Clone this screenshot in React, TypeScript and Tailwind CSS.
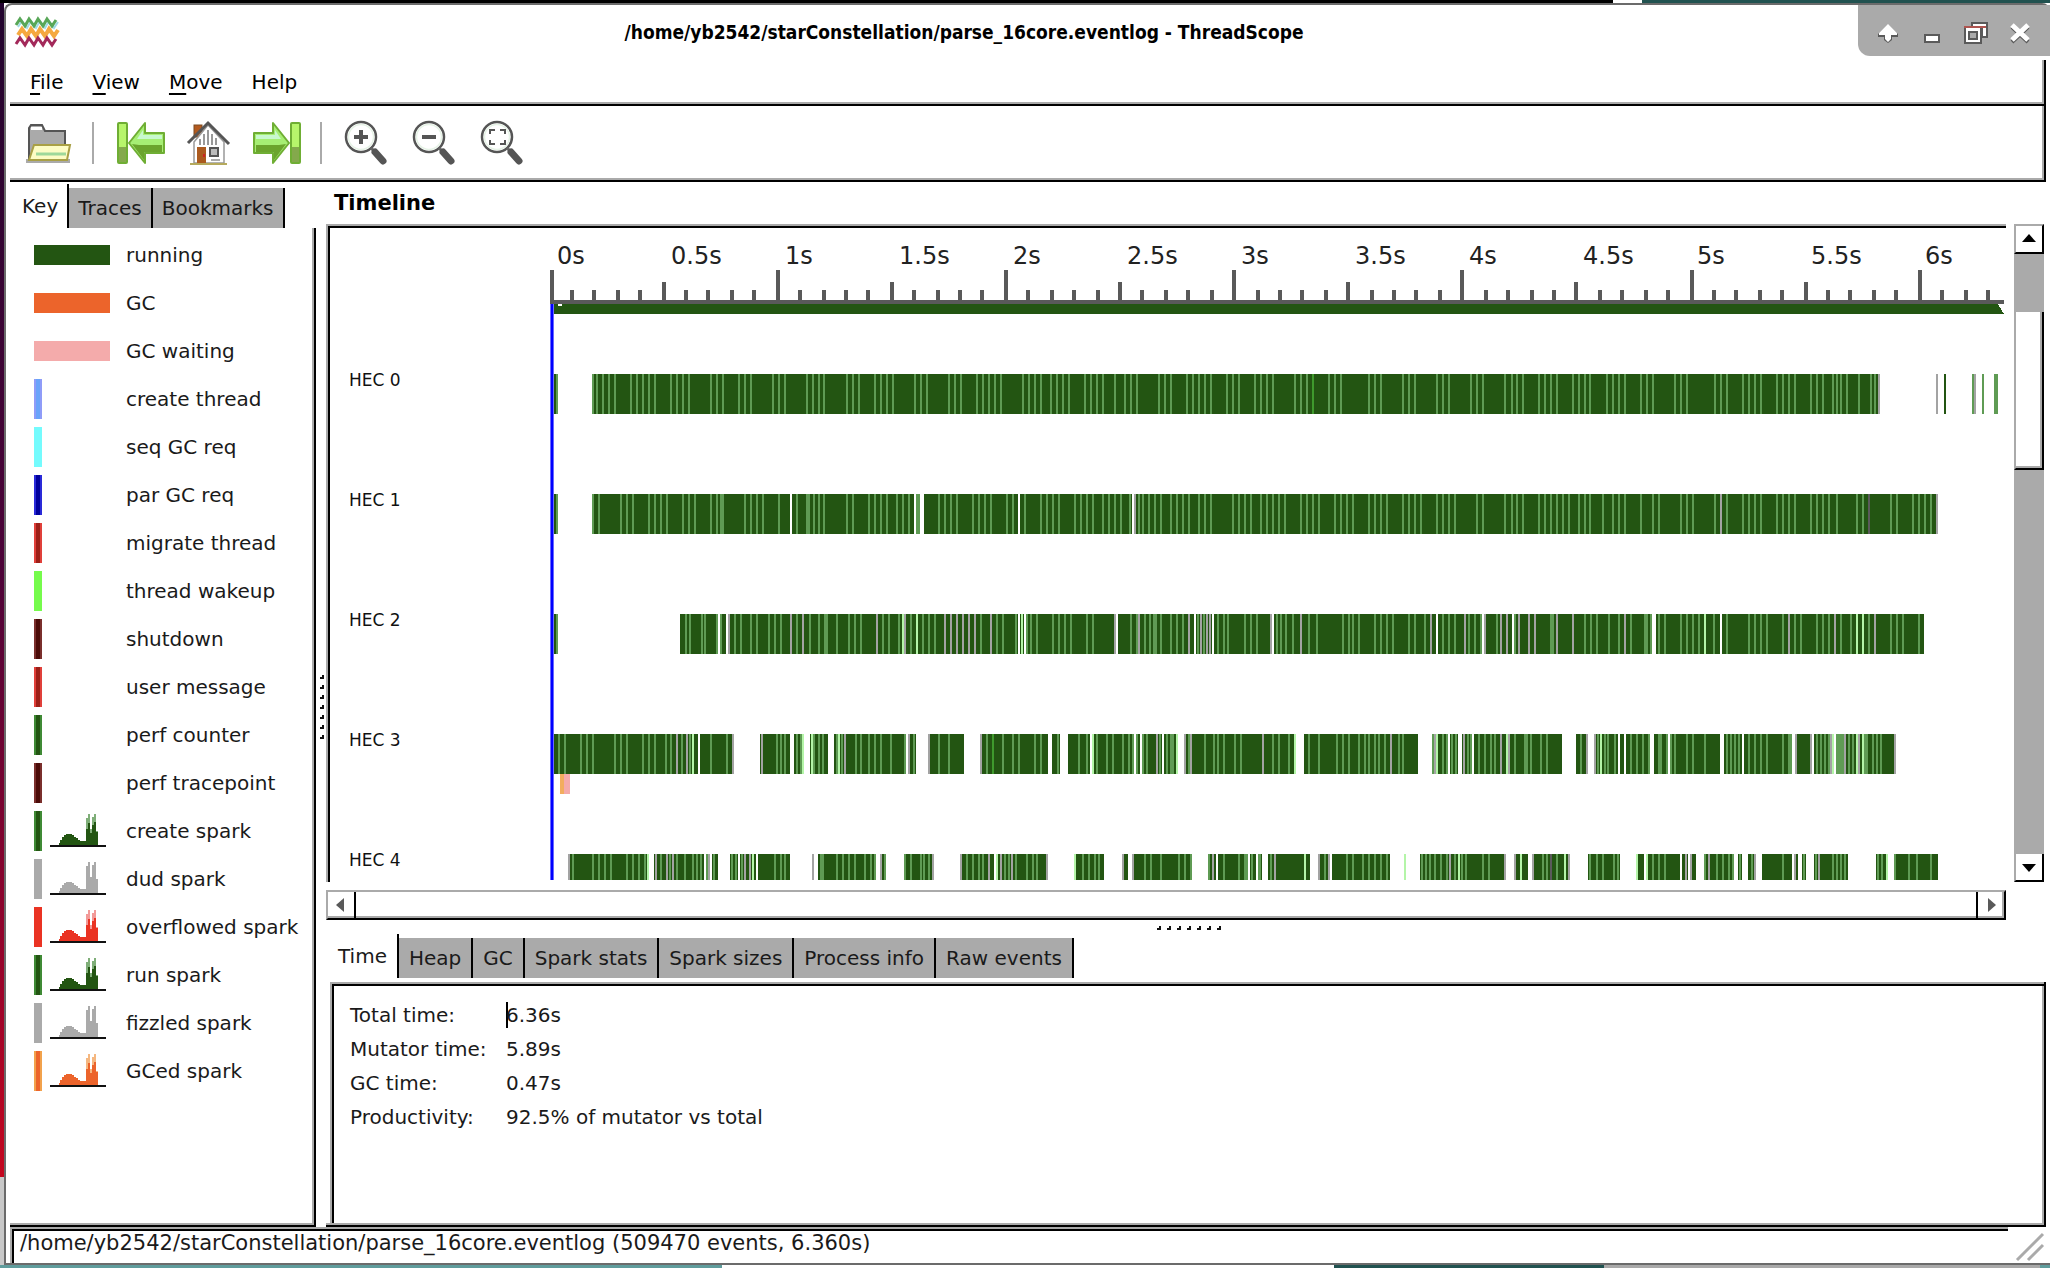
import React from "react";

type Kind = "light" | "gray" | "pale" | "white" | "dark" | "bright";

type Tile = {
  origin: number;
  runs: [number, number][];
  marks: Partial<Record<Kind, number[]>>;
};

const COLORS: Record<Kind, string> = {
  light: "#5f9b54",
  gray: "#a3a3a3",
  pale: "#b4f5a8",
  white: "#ffffff",
  dark: "#5a5a5a",
  bright: "#3f9a2d",
};

const GREEN = "#235512";
const SAMPLES_PER_PIXEL = 1568 / 600;

const snap = (origin: number, v: number) => 2 * Math.round((origin + v / SAMPLES_PER_PIXEL) / 2);

const TRACKS: { name: string; y: number; h: number; tiles: Tile[] }[] = [
  {
    name: "HEC 0",
    y: 374,
    h: 40,
    tiles: [
      {
        origin: 320,
        runs: [[607, 622], [712, 1568]],
        marks: {
          light: [619, 713, 724, 739, 755, 771, 813, 828, 843, 859, 875, 917, 933, 949, 964, 1022, 1037, 1053, 1095, 1110, 1126, 1183, 1199, 1215, 1272, 1288, 1303, 1318, 1377, 1393, 1408, 1450, 1466, 1481, 1497],
        },
      },
      {
        origin: 900,
        runs: [[0, 1568]],
        marks: {
          light: [39, 55, 70, 127, 143, 159, 201, 216, 232, 248, 264, 321, 337, 352, 368, 394, 409, 425, 441, 483, 499, 514, 530, 561, 587, 603, 619, 676, 692, 708, 749, 765, 781, 796, 812, 854, 870, 886, 928, 943, 959, 974, 1032, 1048, 1063, 1121, 1137, 1152, 1225, 1241, 1257, 1315, 1330, 1345, 1403, 1419, 1434, 1493, 1509, 1524],
          bright: [1079],
        },
      },
      {
        origin: 1450,
        runs: [[131, 1122], [1291, 1296]],
        marks: {
          light: [145, 161, 176, 190, 232, 248, 264, 280, 321, 337, 352, 367, 410, 427, 442, 458, 499, 515, 530, 587, 603, 619, 692, 708, 724, 765, 781, 796, 812, 854, 870, 886, 902, 944, 960, 975, 1001, 1012, 1022, 1038, 1069, 1101, 1111, 1367, 1393, 1424, 1429],
          gray: [1121, 1272, 1373],
        },
      },
    ],
  },
  {
    name: "HEC 1",
    y: 494,
    h: 40,
    tiles: [
      {
        origin: 320,
        runs: [[607, 622], [712, 1568]],
        marks: {
          light: [619, 713, 729, 787, 802, 818, 860, 875, 891, 906, 949, 964, 980, 1022, 1037, 1048, 1053, 1110, 1126, 1142, 1157, 1199, 1246, 1272, 1277, 1290, 1303, 1318, 1377, 1393, 1434, 1450, 1466, 1481, 1508, 1523, 1539],
          white: [1230],
        },
      },
      {
        origin: 900,
        runs: [[50, 1568]],
        marks: {
          light: [44, 49, 102, 117, 133, 149, 191, 206, 222, 238, 280, 296, 326, 368, 384, 399, 415, 457, 473, 488, 504, 530, 546, 561, 577, 600, 625, 635, 650, 666, 682, 708, 724, 739, 755, 781, 796, 812, 870, 886, 901, 917, 943, 959, 975, 990, 1006, 1048, 1063, 1079, 1095, 1137, 1152, 1168, 1184, 1225, 1241, 1257, 1272, 1315, 1330, 1345, 1361, 1403, 1419, 1434, 1450, 1508, 1524],
          white: [39, 55, 60, 311, 609],
          gray: [615],
        },
      },
      {
        origin: 1450,
        runs: [[131, 1273]],
        marks: {
          light: [145, 161, 176, 190, 232, 248, 264, 280, 295, 310, 337, 352, 367, 399, 425, 442, 458, 499, 530, 546, 603, 619, 635, 692, 724, 765, 781, 796, 812, 854, 870, 886, 902, 944, 960, 975, 990, 1012, 1064, 1079, 1152, 1168, 1210, 1226, 1241, 1257],
          gray: [708, 1272],
          dark: [1095],
        },
      },
    ],
  },
  {
    name: "HEC 2",
    y: 614,
    h: 40,
    tiles: [
      {
        origin: 320,
        runs: [[607, 622], [941, 1568]],
        marks: {
          light: [619, 957, 967, 997, 1006, 1037, 1048, 1085, 1100, 1126, 1142, 1173, 1189, 1204, 1246, 1280, 1303, 1320, 1326, 1350, 1383, 1398, 1414, 1471, 1487, 1513],
          gray: [1069, 1230, 1262, 1455],
          white: [1042, 1064],
        },
      },
      {
        origin: 900,
        runs: [[0, 1568]],
        marks: {
          light: [28, 60, 75, 91, 212, 254, 270, 303, 332, 342, 358, 399, 415, 430, 446, 488, 504, 603, 619, 640, 653, 663, 668, 682, 708, 724, 739, 780, 795, 830, 846, 857, 901, 917, 932, 985, 995, 1010, 1027, 1069, 1090, 1157, 1173, 1184, 1200, 1241, 1257, 1272, 1288, 1330, 1345, 1371, 1419, 1434, 1450, 1487, 1503, 1518, 1560],
          gray: [12, 117, 133, 149, 165, 180, 196, 238, 563, 625, 755, 786, 801, 811, 970, 1048, 1387, 1476, 1529],
          pale: [7, 44, 318],
          white: [311, 326, 568, 770, 817, 975, 1403, 1524],
        },
      },
      {
        origin: 1450,
        runs: [[131, 528], [537, 1239]],
        marks: {
          light: [170, 264, 269, 352, 368, 383, 415, 442, 473, 510, 516, 525, 546, 562, 603, 619, 635, 650, 690, 724, 781, 796, 812, 828, 870, 902, 917, 959, 975, 991, 1022, 1048, 1095, 1152, 1168, 1184, 1226],
          gray: [134, 149, 180, 206, 222, 279, 321, 458, 885, 1006, 1110],
          pale: [666, 1063, 1079],
          white: [164, 708],
        },
      },
    ],
  },
  {
    name: "HEC 3",
    y: 734,
    h: 40,
    tiles: [
      {
        origin: 320,
        runs: [[607, 1080], [1152, 1228], [1240, 1264], [1282, 1328], [1344, 1531], [1537, 1558]],
        marks: {
          light: [625, 640, 682, 697, 713, 771, 787, 802, 843, 859, 875, 904, 917, 945, 967, 1022, 1063, 1194, 1204, 1215, 1246, 1257, 1290, 1303, 1315, 1350, 1365, 1400, 1414, 1434, 1450, 1466, 1492, 1528, 1552],
          gray: [933, 959, 1079, 1154, 1372, 1540],
          pale: [975, 1262, 1285, 1357],
          white: [990],
        },
      },
      {
        origin: 900,
        runs: [[74, 168], [210, 387], [397, 418], [440, 497], [502, 612], [617, 627], [632, 686], [691, 727], [742, 757], [758, 1035], [1056, 1354], [1390, 1431], [1437, 1458], [1469, 1495], [1500, 1568]],
        marks: {
          light: [102, 128, 227, 270, 295, 311, 353, 368, 413, 467, 488, 514, 540, 556, 582, 598, 608, 620, 635, 645, 680, 697, 708, 713, 755, 797, 821, 832, 848, 875, 891, 975, 990, 1016, 1069, 1095, 1142, 1157, 1173, 1199, 1215, 1226, 1241, 1252, 1267, 1303, 1315, 1392, 1419, 1429, 1442, 1452, 1485, 1493, 1513, 1529, 1545, 1555],
          gray: [76, 212, 671, 745, 760, 948, 1283, 1398, 1474],
          pale: [504, 723, 1033, 1404],
          bright: [243],
        },
      },
      {
        origin: 1450,
        runs: [[131, 293], [329, 360], [376, 439], [445, 455], [460, 523], [533, 570], [575, 706], [716, 763], [768, 894], [902, 945], [951, 1166]],
        marks: {
          light: [170, 195, 200, 211, 238, 253, 342, 387, 405, 412, 432, 473, 488, 504, 520, 546, 551, 566, 578, 588, 619, 635, 666, 724, 734, 745, 755, 781, 796, 812, 828, 870, 886, 891, 960, 970, 980, 990, 1012, 1017, 1022, 1027, 1043, 1053, 1084, 1089, 1105, 1116, 1126],
          gray: [134, 154, 357, 378, 903, 943, 996, 1033, 1068, 1163],
          pale: [150, 395, 1001, 1063, 1079],
          white: [1006],
        },
      },
    ],
  },
  {
    name: "HEC 4",
    y: 854,
    h: 26,
    tiles: [
      {
        origin: 320,
        runs: [[650, 859], [875, 1003], [1009, 1018], [1024, 1040], [1072, 1092], [1098, 1139], [1146, 1228], [1301, 1452], [1463, 1479], [1526, 1568]],
        marks: {
          light: [661, 713, 729, 744, 760, 802, 818, 833, 849, 891, 915, 933, 954, 975, 985, 995, 1012, 1030, 1077, 1088, 1103, 1189, 1204, 1215, 1308, 1315, 1350, 1366, 1383, 1398, 1424, 1440, 1450, 1476, 1530],
          gray: [652, 877, 907, 923, 1017, 1111, 1124, 1288, 1467],
          pale: [857, 1132],
        },
      },
      {
        origin: 900,
        runs: [[10, 89], [158, 246], [251, 387], [456, 533], [581, 596], [606, 763], [805, 826], [831, 909], [917, 930], [935, 946], [962, 1071], [1092, 1124], [1129, 1281], [1358, 1568]],
        marks: {
          light: [28, 54, 64, 75, 175, 191, 207, 217, 275, 285, 303, 332, 347, 358, 478, 493, 509, 520, 640, 655, 682, 729, 744, 760, 808, 846, 886, 902, 906, 919, 938, 942, 970, 1110, 1168, 1184, 1210, 1225, 1241, 1257, 1272, 1364, 1374, 1384, 1399, 1415, 1429, 1450, 1468, 1480, 1523, 1539],
          gray: [86, 160, 233, 264, 293, 384, 583, 609, 818, 980, 1095, 1121, 1437],
          pale: [254, 458, 1058, 1319, 1461],
        },
      },
      {
        origin: 1450,
        runs: [[131, 146], [168, 204], [215, 313], [361, 444], [487, 507], [513, 601], [606, 621], [628, 643], [664, 742], [753, 763], [779, 799], [815, 894], [900, 909], [920, 930], [951, 1040], [1113, 1145], [1160, 1275]],
        marks: {
          light: [243, 253, 279, 367, 383, 399, 428, 440, 530, 546, 562, 667, 698, 714, 729, 740, 757, 788, 870, 925, 957, 1001, 1012, 1022, 1033, 1118, 1129, 1163, 1199, 1220, 1257],
          gray: [143, 170, 217, 310, 618, 630, 676, 797, 902, 965],
          pale: [186, 300, 489, 515, 1142],
          dark: [264],
        },
      },
    ],
  },
];

const KINDS: Kind[] = ["light", "gray", "pale", "white", "dark", "bright"];

function Track({ track }: { track: (typeof TRACKS)[number] }) {
  const { y, h, tiles } = track;
  const runs = tiles
    .flatMap((t) => t.runs.map(([a, b]) => [snap(t.origin, a), snap(t.origin, b)]))
    .map(([a, b]) => `M${a} ${y}H${b}V${y + h}H${a}Z`)
    .join("");
  return (
    <g>
      <text x="349" y={y + 12} fontSize="17" fill="#111">
        {track.name}
      </text>
      <path d={runs} fill={GREEN} />
      {KINDS.map((k) => {
        const d = tiles
          .flatMap((t) => (t.marks[k] ?? []).map((v) => Math.round(t.origin + v / SAMPLES_PER_PIXEL) - 1))
          .map((x) => `M${x} ${y}h2v${h}h-2Z`)
          .join("");
        return d ? <path key={k} d={d} fill={COLORS[k]} /> : null;
      })}
    </g>
  );
}

function TimelineChart() {
  const ticks = Array.from({ length: 64 }, (_, k) => {
    const x = k === 0 ? 552 : 552 + 2 * Math.floor(11.42 * k - 1);
    const top = k % 10 === 0 ? 270 : k % 5 === 0 ? 282 : 290;
    return `M${x - 2} ${top}h4V300h-4Z`;
  }).join("");
  const labels = Array.from({ length: 13 }, (_, i) => i / 2);
  return (
    <svg id="timeline" width="1674" height="654" viewBox="330 228 1674 654" shapeRendering="crispEdges" fontFamily="'DejaVu Sans', sans-serif" role="img" aria-label="Timeline of HEC activity" className="block max-w-none shrink-0">
      {labels.map((t) => (
        <text key={t} x={557 + 228 * t} y="264" fontSize="24" fill="#222">
          {t}s
        </text>
      ))}
      <path d="M552 304H1998L2004 314H552Z" fill={GREEN} />
      <path d={ticks} fill="#595959" />
      <rect x="550" y="300" width="1454" height="4" fill="#595959" />
      <rect x="558" y="304" width="4" height="2" fill="#fff" />
      {TRACKS.map((t) => (
        <Track key={t.name} track={t} />
      ))}
      <rect x="560" y="774" width="4" height="20" fill="#f2ad5e" />
      <rect x="564" y="774" width="6" height="20" fill="#f4abab" />
      <rect x="550" y="304" width="4" height="576" fill="#6a6aff" />
      <rect x="551" y="304" width="2" height="576" fill="#0000ff" />
    </svg>
  );
}

type KeyItem = { label: string; edge: string; fill: string; wide?: boolean; tip?: string; spark?: boolean };

const KEY_ITEMS: KeyItem[] = [
  { label: "running", edge: "#235512", fill: "#235512", wide: true },
  { label: "GC", edge: "#ec642b", fill: "#ec642b", wide: true },
  { label: "GC waiting", edge: "#f4abab", fill: "#f4abab", wide: true },
  { label: "create thread", edge: "#8f9cf8", fill: "#69a3fa" },
  { label: "seq GC req", edge: "#74fbfd", fill: "#74fbfd" },
  { label: "par GC req", edge: "#2a2ad8", fill: "#00009c" },
  { label: "migrate thread", edge: "#e0403a", fill: "#9c1f17" },
  { label: "thread wakeup", edge: "#75fb4c", fill: "#75fb4c" },
  { label: "shutdown", edge: "#7a2f2c", fill: "#4b0b08" },
  { label: "user message", edge: "#e0403a", fill: "#9c1f17" },
  { label: "perf counter", edge: "#3f8a35", fill: "#235512" },
  { label: "perf tracepoint", edge: "#7a2f2c", fill: "#4b0b08" },
  { label: "create spark", edge: "#3f8a35", fill: "#235512", tip: "#7fae78", spark: true },
  { label: "dud spark", edge: "#aaaaaa", fill: "#aaaaaa", tip: "#aaaaaa", spark: true },
  { label: "overflowed spark", edge: "#ea3323", fill: "#ea3323", tip: "#f29a98", spark: true },
  { label: "run spark", edge: "#3f8a35", fill: "#235512", tip: "#7fae78", spark: true },
  { label: "fizzled spark", edge: "#aaaaaa", fill: "#aaaaaa", tip: "#aaaaaa", spark: true },
  { label: "GCed spark", edge: "#f2a24c", fill: "#ec642b", tip: "#f5b780", spark: true },
];

function KeySwatch({ item }: { item: KeyItem }) {
  return (
    <svg width="76" height="40" viewBox="0 0 76 40" shapeRendering="crispEdges" aria-hidden="true">
      {item.wide ? (
        <rect y="10" width="76" height="20" fill={item.fill} />
      ) : (
        <>
          <rect width="8" height="40" fill={item.edge} />
          <rect x="2" width="4" height="40" fill={item.fill} />
        </>
      )}
      {item.spark && (
        <>
          <path d="M52 34V7h2V3h2v15h2V34ZM58 34V6h2V3h2v17h2V34Z" fill={item.tip} />
          <path d="M25 34v-2h1v-3h2v-3h2v-2h2v-1h6v1h2v2h2v1h2v2h2v1h6V18h2v-6h2v10h2v-8h2v-3h2v10h2v13Z" fill={item.fill} />
          <rect x="16" y="34" width="56" height="2" fill="#111" />
        </>
      )}
    </svg>
  );
}

function Logo() {
  const wave = "l4 -6 5 7 4 -7 5 7 4 -7 5 7 4 -7 5 7 4 -6";
  return (
    <svg width="46" height="34" viewBox="0 0 46 34" fill="none" strokeWidth="3" aria-hidden="true">
      <path d={`M4 12${wave}`} stroke="#9fdbe6" strokeWidth="2" />
      <path d={`M2 10${wave}`} stroke="#58a757" />
      <path d={`M4 20${wave}`} stroke="#f5a93f" strokeWidth="4" />
      <path d={`M2 29${wave}`} stroke="#a3295a" />
    </svg>
  );
}

function FolderIcon() {
  return (
    <svg width="48" height="44" viewBox="0 0 48 44" aria-hidden="true">
      <rect x="1" y="38" width="44" height="4" fill="#aaa" />
      <path d="M4 39V7l2-3h11l3 6h20v14H10L6 39Z" fill="#aaa" stroke="#555" strokeWidth="2" />
      <path d="M6 6h11v3H6Z" fill="#fff" />
      <path d="M9 24h36l-3 15H4Z" fill="#fdfcc4" stroke="#a9a045" strokeWidth="2" />
      <path d="M11 33h30" stroke="#9fd89a" strokeWidth="3" />
    </svg>
  );
}

function ArrowIcon({ flip }: { flip?: boolean }) {
  return (
    <svg width="48" height="44" viewBox="0 0 48 44" className={flip ? "-scale-x-100" : ""} aria-hidden="true">
      <g stroke="#6fae34" strokeWidth="2" strokeLinejoin="round">
        <rect x="1" y="2" width="9" height="40" rx="1" fill="#b7f56b" />
        <path d="M12 22 28 2v10h19v20H28v10Z" fill="#a6ee74" />
      </g>
      <path d="M2 26h7v15H2Z" fill="#84a94c" />
      <path d="M26 9v5h19v4H20Z" fill="#c8f8ce" />
      <path d="M15 23l7 1h23v7H27v8Z" fill="#6ba42d" />
    </svg>
  );
}

function HomeIcon() {
  return (
    <svg width="46" height="46" viewBox="0 0 46 46" aria-hidden="true">
      <rect x="8" y="5" width="8" height="12" fill="#b45a1e" stroke="#7a4a20" />
      <path d="M8 22 22 5l16 17v21H8Z" fill="#fff" stroke="#999" strokeWidth="1.5" />
      <path d="M14 19v6M18 14v11M22 10v15M26 14v11M30 18v7" stroke="#999" strokeWidth="2" />
      <path d="M2 23 22 3l21 21" fill="none" stroke="#555" strokeWidth="3" />
      <rect x="11" y="27" width="9" height="16" fill="#ab5a1e" />
      <rect x="17" y="34" width="2" height="3" fill="#c22" />
      <rect x="24" y="28" width="8" height="8" fill="#bbb" stroke="#555" strokeWidth="2" />
      <path d="M25 40h9" stroke="#aaa" strokeWidth="2" />
      <path d="M4 44h37" stroke="#b5a95c" strokeWidth="2" />
    </svg>
  );
}

function ZoomIcon({ kind }: { kind: "in" | "out" | "fit" }) {
  return (
    <svg width="46" height="46" viewBox="0 0 46 46" fill="none" aria-hidden="true">
      <circle cx="18" cy="17" r="15" stroke="#555" strokeWidth="2.5" />
      <circle cx="18" cy="17" r="12.5" stroke="#e6f3e6" strokeWidth="1.5" />
      <path d="M28 28l3 3" stroke="#666" strokeWidth="3" />
      <path d="M32 32l8 9" stroke="#555" strokeWidth="7" strokeLinecap="round" />
      {kind === "in" && <path d="M11 17h14M18 10v14" stroke="#555" strokeWidth="4" />}
      {kind === "out" && <path d="M11 17h14" stroke="#555" strokeWidth="4" />}
      {kind === "fit" && <path d="M11 14v-4h5M21 10h5v4M26 20v4h-5M16 24h-5v-4" stroke="#555" strokeWidth="2" />}
    </svg>
  );
}

function ToolButton({ label, children }: { label: string; children: React.ReactNode }) {
  return (
    <button type="button" aria-label={label} className="flex h-12 w-12 shrink-0 items-center justify-center">
      {children}
    </button>
  );
}

function WindowButton({ label, children }: { label: string; children: React.ReactNode }) {
  return (
    <button type="button" aria-label={label} className="flex h-9 w-11 items-center justify-center">
      <svg width="28" height="28" viewBox="0 0 28 28" aria-hidden="true">
        {children}
      </svg>
    </button>
  );
}

function Tabs({ label, names, compact }: { label: string; names: string[]; compact?: boolean }) {
  return (
    <div role="tablist" aria-label={label} className="flex h-11 shrink-0 items-end whitespace-nowrap">
      {names.map((n, i) =>
        i === 0 ? (
          <button key={n} role="tab" aria-selected="true" type="button" className={`h-11 border-r-2 border-black pl-3 ${compact ? "pr-[9px]" : "pr-2.5"}`}>
            {n}
          </button>
        ) : (
          <button key={n} role="tab" aria-selected="false" type="button" className={`h-10 border-r-2 border-black bg-[#aaaaaa] ${compact ? "px-[9px]" : "px-2.5"}`}>
            {n}
          </button>
        ),
      )}
    </div>
  );
}

function Arrow({ d, fill = "#000" }: { d: string; fill?: string }) {
  return (
    <svg width="16" height="16" viewBox="0 0 16 16" aria-hidden="true">
      <path d={d} fill={fill} />
    </svg>
  );
}

function Grip({ vertical }: { vertical?: boolean }) {
  return (
    <svg width={vertical ? 6 : 66} height={vertical ? 66 : 6} className="shrink-0" aria-hidden="true">
      {Array.from({ length: 7 }, (_, i) => (
        <path key={i} transform={vertical ? `translate(0 ${i * 10})` : `translate(${i * 10} 0)`} d="M0 5h4V1h-2v2h-2Z" fill="#111" />
      ))}
    </svg>
  );
}

const STATS = [
  ["Total time:", "6.36s"],
  ["Mutator time:", "5.89s"],
  ["GC time:", "0.47s"],
  ["Productivity:", "92.5% of mutator vs total"],
];

export default function App() {
  return (
    <div className="flex min-h-screen flex-col bg-white font-['DejaVu_Sans',sans-serif] text-[20px] leading-6 text-[#1a1a1a]">
      <div className="flex h-[3px] shrink-0">
        <div className="w-[1613px] bg-black" />
        <div className="w-[29px] bg-white" />
        <div className="flex-1 bg-[#215250]" />
      </div>

      <div className="flex flex-1">
        <div className="w-1 shrink-0 bg-[linear-gradient(#22042e_0%,#4d0338_45%,#a00328_80%,#c4061e_93%,#c8c8c8_93%)]" />
        <div className="flex min-w-0 flex-1 flex-col rounded-t-lg border-2 border-r-0 border-[#6b6b6b] bg-white">
          <header className="flex h-[55px] shrink-0 items-start">
            <div className="flex w-16 shrink-0 pt-2.5 pl-2">
              <Logo />
            </div>
            <h1 className="flex-1 pt-[15px] text-center font-['DejaVu_Sans_Condensed','DejaVu_Sans',sans-serif] text-[19px] font-bold text-black">
              /home/yb2542/starConstellation/parse_16core.eventlog - ThreadScope
            </h1>
            <div className="flex h-[51px] w-48 shrink-0 items-center rounded-bl-xl bg-[#aaaaaa] pt-1 pl-2">
              <WindowButton label="Keep above">
                <path d="M14 6 24 15v3h-6v3l-4 3-4-3v-3H4v-3Z" fill="#5a5a5a" />
                <path d="M14 5 23 14v2h-6v4l-3 3-3-3v-4H5v-2Z" fill="#fff" />
              </WindowButton>
              <WindowButton label="Minimize">
                <rect x="7" y="16" width="14" height="7" fill="#fff" stroke="#5a5a5a" strokeWidth="2" />
              </WindowButton>
              <WindowButton label="Restore">
                <path d="M10 4h15v14h-5V8H10Z" fill="#fff" stroke="#5a5a5a" strokeWidth="2" />
                <rect x="3" y="8" width="16" height="16" fill="#fff" stroke="#5a5a5a" strokeWidth="2" />
                <path d="M2 8h22" stroke="#b05550" strokeWidth="2" />
                <rect x="7" y="13" width="8" height="7" fill="#aaa" stroke="#5a5a5a" strokeWidth="2" />
              </WindowButton>
              <WindowButton label="Close">
                <path d="M6 8l16 15M22 8L6 23" stroke="#5a5a5a" strokeWidth="4" />
                <path d="M6 6l16 15M22 6L6 21" stroke="#fff" strokeWidth="5" />
              </WindowButton>
            </div>
          </header>

          <nav aria-label="Menu bar" className="mr-1 ml-1 flex h-[46px] shrink-0 items-center gap-[29px] border-r-2 border-b-2 border-black pl-5 text-black shadow-[inset_-2px_-2px_0_#aaaaaa]">
            <button type="button"><span className="underline decoration-2 underline-offset-4">F</span>ile</button>
            <button type="button"><span className="underline decoration-2 underline-offset-4">V</span>iew</button>
            <button type="button"><span className="underline decoration-2 underline-offset-4">M</span>ove</button>
            <button type="button">Help</button>
          </nav>

          <div role="toolbar" aria-label="Toolbar" className="mr-1 ml-1 flex h-[76px] shrink-0 items-center border-r-2 border-b-2 border-black pl-[15px] shadow-[inset_-2px_-2px_0_#aaaaaa]">
            <ToolButton label="Open"><FolderIcon /></ToolButton>
            <div className="mr-[23px] ml-[19px] h-[42px] w-0.5 bg-[#aaaaaa]" />
            <div className="flex gap-5">
              <ToolButton label="Jump to start"><ArrowIcon /></ToolButton>
              <ToolButton label="Centre on cursor"><HomeIcon /></ToolButton>
              <ToolButton label="Jump to end"><ArrowIcon flip /></ToolButton>
            </div>
            <div className="mr-[20px] ml-[19px] h-[42px] w-0.5 bg-[#aaaaaa]" />
            <div className="flex gap-5">
              <ToolButton label="Zoom in"><ZoomIcon kind="in" /></ToolButton>
              <ToolButton label="Zoom out"><ZoomIcon kind="out" /></ToolButton>
              <ToolButton label="Fit to window"><ZoomIcon kind="fit" /></ToolButton>
            </div>
          </div>

          <main className="flex flex-1 pl-1">
            <aside className="flex w-[306px] shrink-0 flex-col pt-0.5">
              <Tabs label="Side panel" names={["Key", "Traces", "Bookmarks"]} compact />
              <ul className="flex-1 border-r-2 border-b-2 border-black pt-[3px] pl-6 shadow-[inset_-2px_-2px_0_#aaaaaa]">
                {KEY_ITEMS.map((item) => (
                  <li key={item.label} className="flex h-12 items-center gap-4 whitespace-nowrap">
                    <KeySwatch item={item} />
                    {item.label}
                  </li>
                ))}
              </ul>
            </aside>

            <div className="flex w-2.5 shrink-0 items-center justify-end pt-1">
              <Grip vertical />
            </div>

            <section className="flex min-w-0 flex-1 flex-col">
              <h2 className="h-[42px] shrink-0 pt-[9px] pl-2 text-[21px] font-bold text-black">Timeline</h2>
              <div className="flex h-[658px] shrink-0 gap-2 pr-1.5">
                <div className="min-w-0 flex-1 border-t-2 border-l-2 border-[#aaaaaa]">
                  <div className="h-full overflow-hidden border-t-2 border-l-2 border-black">
                    <TimelineChart />
                  </div>
                </div>
                <div className="flex w-[30px] flex-col bg-[#aaaaaa]">
                  <button type="button" aria-label="Scroll up" className="flex h-[30px] items-center justify-center border-2 border-t-[#aaaaaa] border-r-black border-b-black border-l-[#aaaaaa] bg-white">
                    <Arrow d="M8 3 15 11H1Z" />
                  </button>
                  <div className="flex-1 pt-[58px]">
                    <div role="scrollbar" aria-label="Vertical position" aria-controls="timeline" aria-valuenow={15} className="h-[158px] border-r-2 border-b-2 border-l-2 border-r-black border-b-black border-l-[#aaaaaa] bg-white shadow-[inset_-2px_-2px_0_#aaaaaa]" />
                  </div>
                  <button type="button" aria-label="Scroll down" className="flex h-7 items-center justify-center border-r-2 border-b-2 border-l-2 border-r-black border-b-black border-l-[#aaaaaa] bg-white">
                    <Arrow d="M8 13 15 5H1Z" />
                  </button>
                </div>
              </div>
              <div className="mt-2 mr-11 flex h-[30px] shrink-0 border-2 border-t-[#aaaaaa] border-r-black border-b-black border-l-[#aaaaaa] shadow-[inset_-2px_-2px_0_#aaaaaa]">
                <button type="button" aria-label="Scroll left" className="flex w-7 items-center justify-center border-r-2 border-black"><Arrow d="M3 8 11 1V15Z" fill="#595959" /></button>
                <div className="flex-1" />
                <button type="button" aria-label="Scroll right" className="flex w-7 items-center justify-center border-l-2 border-black"><Arrow d="M13 8 5 1V15Z" fill="#595959" /></button>
              </div>
              <div className="flex h-3.5 shrink-0 items-center justify-center pt-0.5 pl-1">
                <Grip />
              </div>
              <Tabs label="Details" names={["Time", "Heap", "GC", "Spark stats", "Spark sizes", "Process info", "Raw events"]} />
              <div className="mt-1 mr-1 flex flex-1 flex-col border-r-2 border-b-2 border-black pb-0.5 pl-1 shadow-[inset_-2px_-2px_0_#aaaaaa]">
                <div className="flex-1 border-t-2 border-l-2 border-[#aaaaaa]">
                  <div className="h-full border-t-2 border-l-2 border-black pt-3 pl-4">
                    <table>
                      <tbody>
                        {STATS.map(([k, v], i) => (
                          <tr key={k} className="h-[34px]">
                            <th scope="row" className="w-[156px] text-left font-normal">{k}</th>
                            <td className={i === 0 ? "bg-[linear-gradient(#000,#000)] bg-[length:2px_26px] bg-[position:0_center] bg-no-repeat" : ""}>{v}</td>
                          </tr>
                        ))}
                      </tbody>
                    </table>
                  </div>
                </div>
              </div>
            </section>
          </main>

          <footer className="mr-1 ml-1 flex h-9 shrink-0 justify-between">
            <div className="flex-1 border-t-2 border-l-2 border-[#aaaaaa]">
              <div className="h-full border-t-2 border-l-2 border-black pl-1.5 text-[21px]">
                /home/yb2542/starConstellation/parse_16core.eventlog (509470 events, 6.360s)
              </div>
            </div>
            <svg width="38" height="36" aria-hidden="true" stroke="#aaaaaa" strokeWidth="3">
              <path d="M9 33 35 7M20 33 35 18" />
            </svg>
          </footer>
        </div>
      </div>

      <div className="flex h-[3px] shrink-0">
        <div className="w-[722px] bg-[#5f9c9c]" />
        <div className="w-[612px] bg-white" />
        <div className="w-[270px] bg-[#215250]" />
        <div className="flex-1 bg-[#a9a9a9]" />
        <div className="w-2.5 bg-[#5f9c9c]" />
      </div>
    </div>
  );
}
